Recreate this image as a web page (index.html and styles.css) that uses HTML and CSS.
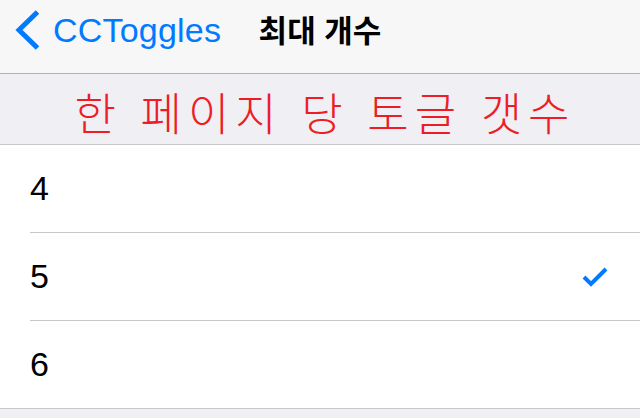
FILE: index.html
```html
<!DOCTYPE html>
<html lang="ko">
<head>
<meta charset="utf-8">
<link rel="stylesheet" href="styles.css">
</head>
<body>
<div class="screen">
  <header class="nav">
    <a class="back">
      <svg class="chev" width="28" height="42" viewBox="0 0 28 42"><path d="M23.5 3 L5 21 L23.5 39" fill="none" stroke="#007aff" stroke-width="5" stroke-linecap="butt" stroke-linejoin="miter"/></svg>
      <span class="back-label">CCToggles</span>
    </a>
    <h1 class="title">최대 개수</h1>
  </header>
  <div class="section-head">한 페이지 당 토글 갯수</div>
  <ul class="list">
    <li class="row"><span class="val">4</span></li>
    <li class="row"><span class="val">5</span>
      <svg class="check" width="28" height="22" viewBox="0 0 28 22"><path d="M3 11 L10 18 L25 3" fill="none" stroke="#007aff" stroke-width="4"/></svg>
    </li>
    <li class="row"><span class="val">6</span></li>
  </ul>
  <div class="footer"></div>
</div>
</body>
</html>
```
FILE: styles.css
```css
html, body {
  margin: 0;
  padding: 0;
}
body {
  background: #efeff4;
  font-family: "Liberation Sans", Arial, "Noto Sans CJK KR", sans-serif;
}
.screen {
  width: 640px;
  height: 418px;
  overflow: hidden;
  display: flex;
  flex-direction: column;
}
.nav {
  position: relative;
  height: 73px;
  background: #f7f7f7;
  border-bottom: 1px solid #b2b2b2;
  display: flex;
  align-items: center;
  flex-shrink: 0;
}
.back {
  display: flex;
  align-items: center;
  padding-left: 14px;
  margin-top: -13px;
  color: #007aff;
}
.chev {
  display: block;
}
.back-label {
  margin-left: 11px;
  font-size: 34px;
  letter-spacing: 0.2px;
}
.title {
  position: absolute;
  left: 0;
  right: 0;
  top: 11px;
  margin: 0;
  text-align: center;
  font-family: "Noto Sans CJK KR", sans-serif;
  font-weight: 700;
  font-size: 31px;
  line-height: 36px;
  color: #000;
}
.section-head {
  height: 70px;
  border-bottom: 1px solid #c8c7cc;
  background: #efeff4;
  color: #ee1c25;
  font-family: "Noto Sans CJK KR", sans-serif;
  font-weight: 300;
  font-size: 45px;
  letter-spacing: 6px;
  word-spacing: 0;
  line-height: 76px;
  text-align: center;
  padding-left: 10px;
  flex-shrink: 0;
}
.list {
  list-style: none;
  margin: 0;
  padding: 0 0 0 30px;
  background: #fff;
  border-bottom: 1px solid #c8c7cc;
  flex-shrink: 0;
}
.row {
  height: 87px;
  display: flex;
  align-items: center;
  justify-content: space-between;
  padding-right: 30px;
  border-bottom: 1px solid #c8c7cc;
  font-size: 34px;
  color: #000;
}
.row:last-child {
  border-bottom: none;
}
.check {
  display: block;
  margin-right: 1px;
}
.footer {
  flex: 1;
  background: #efeff4;
}
```
